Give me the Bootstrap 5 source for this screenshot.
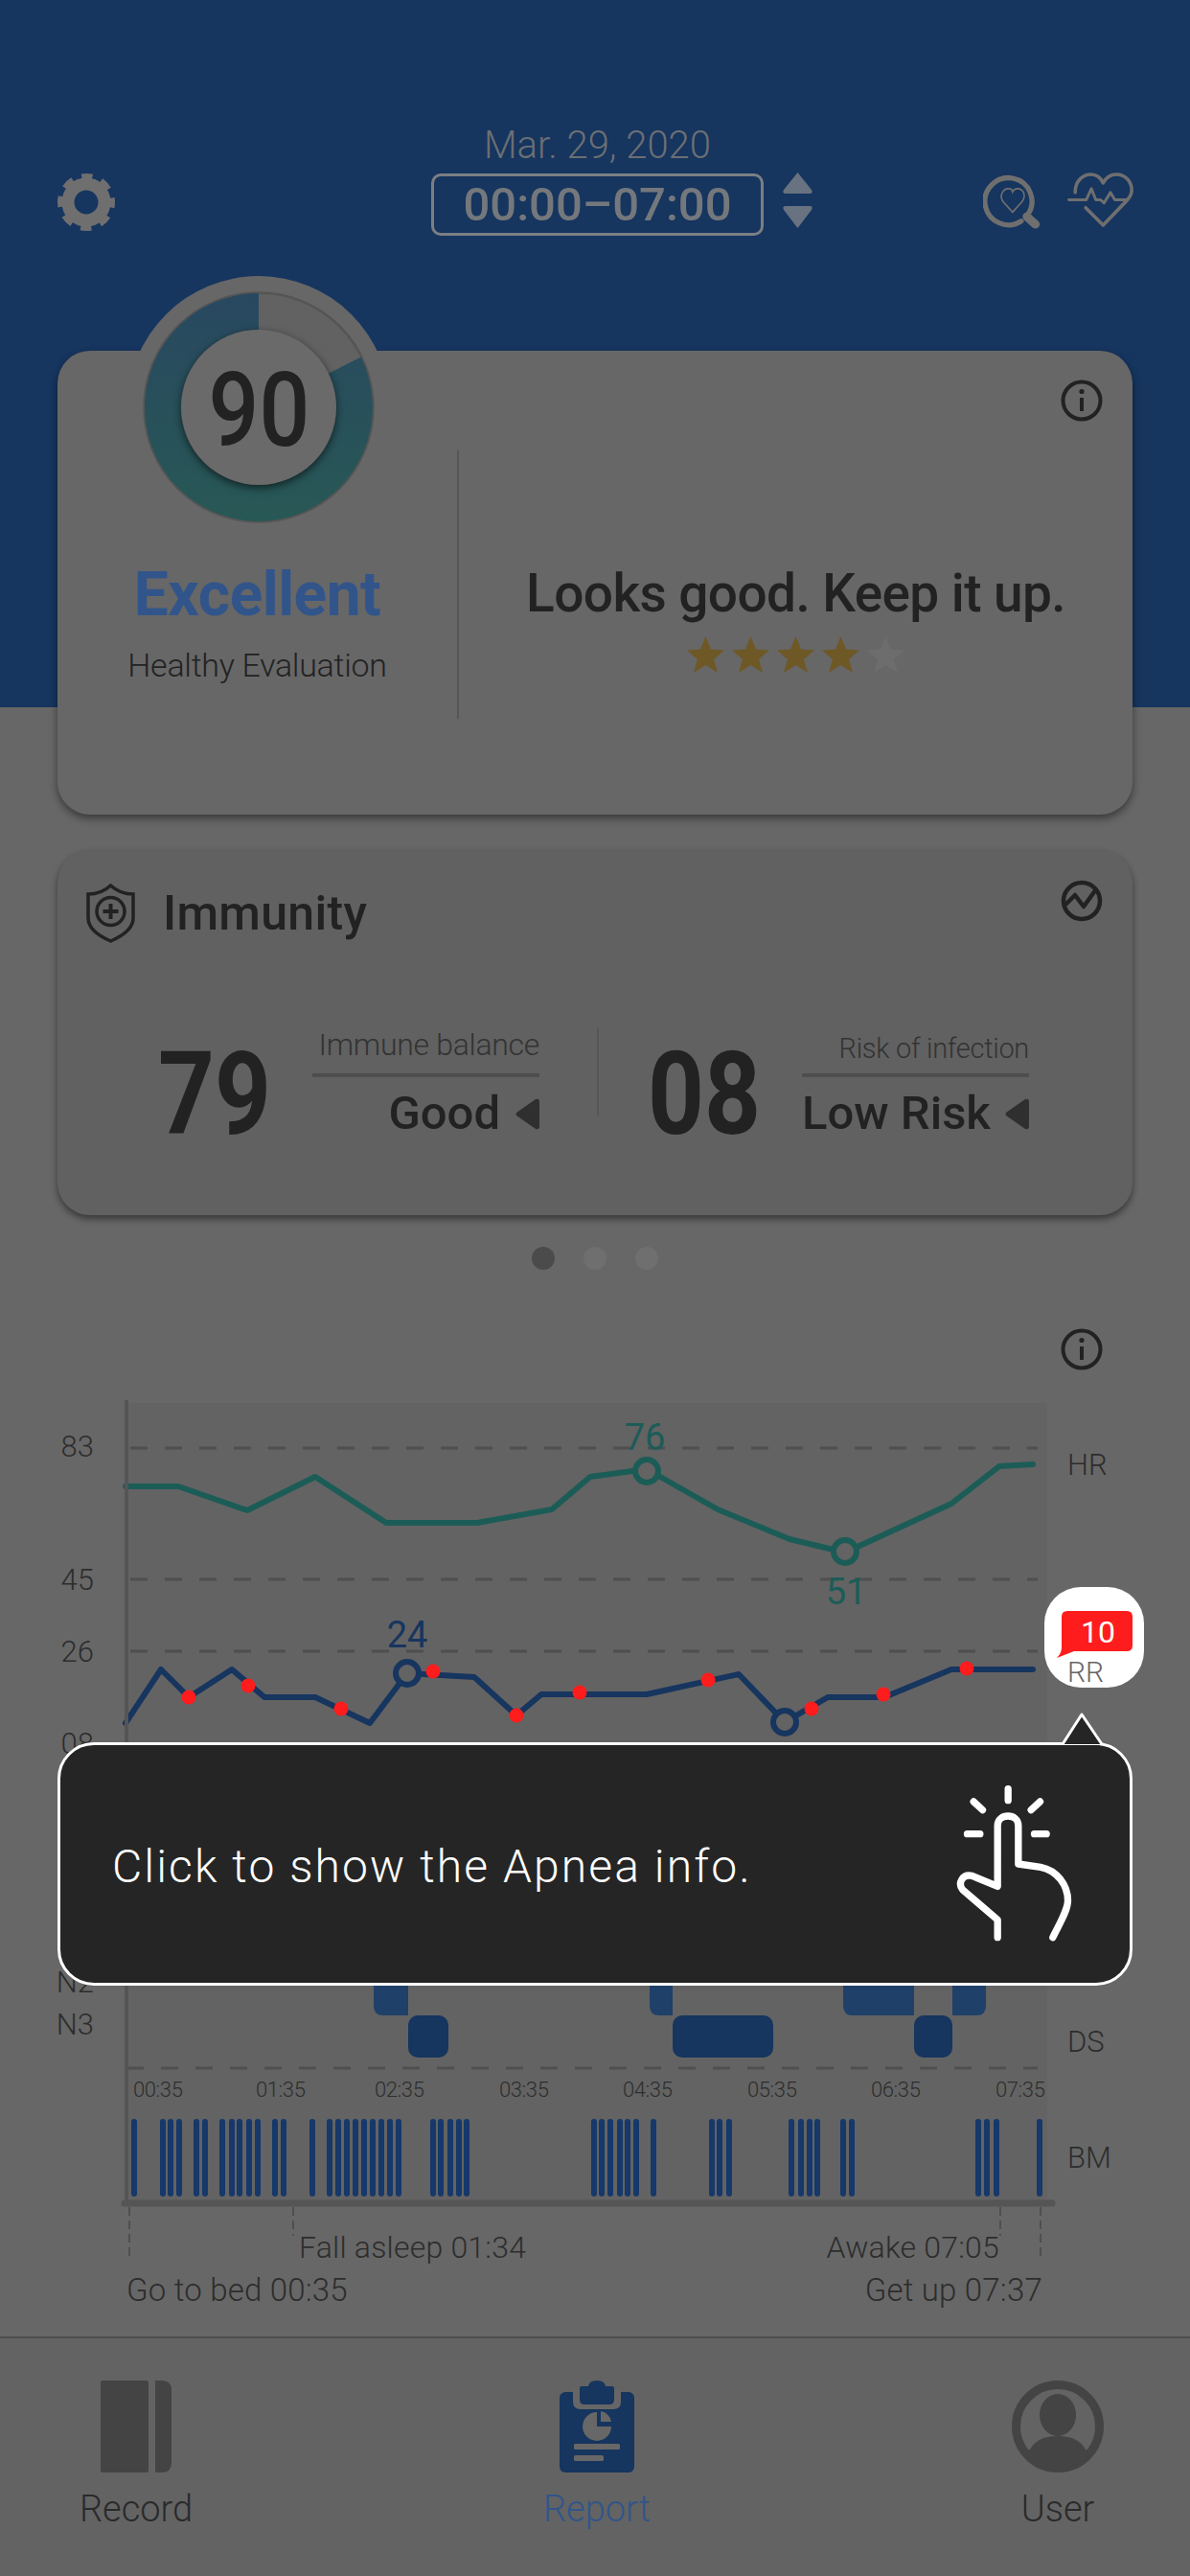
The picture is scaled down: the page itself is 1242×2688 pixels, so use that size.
<!DOCTYPE html>
<html lang="en">
<head>
<meta charset="UTF-8">
<meta name="viewport" content="width=device-width, initial-scale=1.0">
<title>Sleep Report</title>
<link href="https://cdn.jsdelivr.net/npm/bootstrap@5.3.2/dist/css/bootstrap.min.css" rel="stylesheet">
<style>
html, body { margin: 0; background: #676767; }
body { font-family: Roboto, "Liberation Sans", sans-serif; color: #222; }
.app-page { width: 1242px; height: 2688px; overflow: hidden; background: linear-gradient(#16355f 738px, #676767 738px); }
.narrow-num { display: inline-block; font-weight: 700; line-height: 1; transform-origin: left center; }

/* header */
.top-head { height: 366px; padding: 133px 55px 0 60px; display: grid; grid-template-columns: 1fr 347px 1fr; }
.gear-wrap { padding-top: 47px; }
.date-line { font-size: 40px; font-weight: 300; color: #6b6f74; text-align: center; line-height: 38px; margin-bottom: 10px; }
.time-box { height: 65px; border: 3px solid #7b7f84; border-radius: 10px; font-size: 49px; font-weight: 500; color: #74787c; line-height: 59px; text-align: center; }
.head-right { padding-top: 44px; padding-left: 19px; }
.heart-icon { margin-left: 23px; }

/* score card */
.score-card { height: 484px; margin: 0 60px; background: #676767; border-radius: 34px; box-shadow: 0 4px 8px rgba(0,0,0,.45); --bs-card-border-width: 0; }
.score-left { width: 417px; }
.gauge { width: 274px; height: 274px; margin: -78px 0 0 3px; border-radius: 50%; background: #676767; display: grid; place-items: center; }
.gauge > * { grid-area: 1 / 1; }
.gauge-num { width: 162px; height: 162px; border-radius: 50%; background: #6a6a6a; box-shadow: 0 3px 9px rgba(0,0,0,.6); display: flex; align-items: center; justify-content: center; padding-top: 6px; }
.gauge-num span { font-size: 108px; font-weight: 500; transform: scaleX(.86); transform-origin: center; }
.score-word { font-size: 64px; font-weight: 700; color: #31558a; line-height: 70px; margin-top: 24px; letter-spacing: -.5px; }
.score-sub { font-size: 34px; font-weight: 300; line-height: 40px; margin-top: 18px; letter-spacing: -.3px; }
.score-rule { width: 2px; height: 280px; margin-top: 104px; background: #565656; }
.score-right .info-row { padding: 30px 31px 0 0; }
.score-msg { font-size: 55px; font-weight: 500; line-height: 58px; margin-top: 150px; letter-spacing: -.6px; }
.star-row { margin-top: 16px; }

/* immunity card */
.immu-card { height: 381px; margin: 37px 60px 0; background: #616161; border-radius: 34px; box-shadow: 0 4px 7px rgba(0,0,0,.45); padding: 31px 31px 0 30px; --bs-card-border-width: 0; }
.immu-title { font-size: 50px; font-weight: 500; line-height: 60px; margin-left: 29px; margin-top: 5px; letter-spacing: .3px; }
.stat-row { margin-top: 88px; padding-left: 75px; }
.stat-big { width: 161px; font-size: 121px; margin-top: -20px; }
.stat-big span { transform: scaleX(.85); }
.stat-info { width: 237px; }
.stat-label { font-size: 32px; font-weight: 300; color: #333; line-height: 36px; height: 48px; text-align: right; letter-spacing: -.3px; }
.stat-label.low-label { font-size: 29px; padding-top: 4px; }
.stat-rule { height: 4px; background: #4e4e4e; }
.stat-value { font-size: 49px; font-weight: 500; line-height: 50px; margin-top: 13px; }
.stat-split { width: 2px; height: 92px; background: #565656; margin: 0 51px 0 60px; }

/* pager */
.pager-row { margin-top: 33px; gap: 30px; }
.pager-dot { width: 24px; height: 24px; border-radius: 50%; background: #6f6f6f; }
.pager-dot.on { background: #4b4b4b; }

.chart-info { padding: 61px 91px 0 0; height: 115px; }
.chart-svg { display: block; }
.chart-svg text { font-family: Roboto, "Liberation Sans", sans-serif; font-weight: 300; fill: #2d2d2d; }
.chart-svg .axis-txt { font-size: 31px; }
.chart-svg .time-txt { font-size: 22px; letter-spacing: -.4px; }
.chart-svg .foot-txt { font-size: 32px; letter-spacing: .2px; }
.chart-svg .foot-low { font-size: 33px; letter-spacing: .2px; }
.chart-svg .hr-val { font-size: 38px; fill: #1c5c57; font-weight: 400; }
.chart-svg .rr-val { font-size: 38px; fill: #16355f; font-weight: 400; }

/* bottom tabs */
.tab-bar { height: 250px; background: #636363; border-top: 2px solid #4e4e4e; padding: 44px 38px 0 42px; }
.tab-item { width: 200px; font-size: 38px; font-weight: 300; color: #2a2a2a; text-align: center; line-height: 46px; }
.tab-item.on { color: #31558a; }
.tab-icon { height: 96px; display: block; margin: 0 auto 15px; }

/* overlay tip */
.tip-box { left: 60px; top: 1818px; width: 1122px; height: 254px; background: #252525; border: 3px solid #fff; border-radius: 38px; color: #fff; padding: 0 56px 0 54px; }
.tip-text { font-size: 48px; font-weight: 300; letter-spacing: 2.1px; padding-top: 5px; }
.tip-arrow { left: 1106px; top: 1786px; z-index: 3; }
.rr-chip { left: 1090px; top: 1656px; width: 104px; height: 105px; background: #fff; border-radius: 38px; }
.rr-chip text { font-family: Roboto, "Liberation Sans", sans-serif; }
</style>
</head>
<body>
<div class="app-page position-relative">

    <!-- header -->
    <div class="top-head">
        <div class="gear-wrap">
            <svg width="60" height="62" viewBox="0 0 60 62"><circle cx="30" cy="31" r="19" fill="none" stroke="#6f6f6f" stroke-width="13"/><circle cx="30" cy="31" r="26" fill="none" stroke="#6f6f6f" stroke-width="8" stroke-dasharray="11 9.42" stroke-dashoffset="5.5"/></svg>
        </div>
        <div>
            <div class="date-line">Mar. 29, 2020</div>
            <div class="time-box">00:00–07:00</div>
        </div>
        <div class="head-right d-flex align-items-start">
            <svg width="33" height="62" viewBox="0 0 33 62"><path d="M16.5 3 L31 21 Q33 25 29 25 H4 Q0 25 2 21 Z" fill="#697280"/><path d="M16.5 61 L31 42 Q33 38 29 38 H4 Q0 38 2 42 Z" fill="#697280"/></svg>
            <svg class="ms-auto" width="63" height="63" viewBox="130 50 190 190" fill="none" stroke="#6f6f6f"><path d="M250 212 A74 74 0 1 1 272 190" stroke-width="16" stroke-linecap="round"/><path d="M268 198 L295 222" stroke-width="27" stroke-linecap="round"/><path d="M223 184 L194 152 C178 130 195 108 212 110 C218 110 222 114 223 120 C226 114 232 110 238 110 C256 110 268 130 252 152 Z" stroke-width="5"/></svg>
            <svg class="heart-icon" width="75" height="63" viewBox="395 50 225 190" fill="none" stroke="#6f6f6f" stroke-width="11" stroke-linecap="round" stroke-linejoin="round"><path d="M425 122 C425 85 450 65 475 65 C490 65 505 75 513 92 C522 75 537 65 555 65 C585 65 603 90 603 115 C603 130 595 140 585 150 L513 225 L458 170"/><path d="M405 145 H460 L476 110 L490 145 H505 L516 155 L536 122 L550 145 H590" stroke-width="9"/></svg>
        </div>
    </div>

    <!-- score -->
    <div class="card score-card flex-row">
        <div class="score-left d-flex flex-column align-items-center text-center">
            <div class="gauge">
                <svg width="242" height="242" viewBox="0 0 242 242">
                    <defs><linearGradient id="ringFill" x1="0" y1="0" x2="0" y2="1"><stop offset="0" stop-color="#284860"/><stop offset="1" stop-color="#285855"/></linearGradient></defs>
                    <circle cx="121" cy="121" r="119.5" fill="#626262" stroke="#555" stroke-width="2.5"/>
                    <path d="M121 2 A119 119 0 1 0 227.8 68.6 L193.7 85.7 A81 81 0 1 1 121 40 Z" fill="url(#ringFill)"/>
                </svg>
                <div class="gauge-num"><span class="narrow-num">90</span></div>
            </div>
            <div class="score-word">Excellent</div>
            <div class="score-sub">Healthy Evaluation</div>
        </div>
        <div class="score-rule"></div>
        <div class="score-right flex-fill text-center">
            <div class="info-row d-flex justify-content-end">
                <svg width="44" height="44" viewBox="0 0 44 44" fill="none" stroke="#222" stroke-width="4"><circle cx="22" cy="22" r="19.5"/><path d="M22 19 V33"/><circle cx="22" cy="12.5" r="2.6" fill="#222" stroke="none"/></svg>
            </div>
            <div class="score-msg">Looks good. Keep it up.</div>
            <div class="star-row d-flex justify-content-center" id="starRow"></div>
        </div>
    </div>

    <!-- immunity -->
    <div class="card immu-card">
        <div class="d-flex align-items-start">
            <svg class="mt-1" width="51" height="62" viewBox="0 0 51 62" fill="none" stroke="#222" stroke-width="3.5"><path d="M25.5 2 C33 9 41 11 49 11 V36 C49 47 37 55 25.5 60 C14 55 2 47 2 36 V11 C10 11 18 9 25.5 2 Z"/><circle cx="25.5" cy="29" r="14.5"/><path d="M25.5 21 V37 M17.5 29 H33.5" stroke-width="4"/></svg>
            <div class="immu-title flex-fill">Immunity</div>
            <svg width="44" height="44" viewBox="0 0 44 44" fill="none" stroke="#222" stroke-width="4.5" stroke-linejoin="round"><circle cx="22" cy="22" r="19"/><path d="M5 26 L15 16 L24 28 L37 10"/></svg>
        </div>
        <div class="stat-row d-flex align-items-start">
            <div class="stat-big"><span class="narrow-num">79</span></div>
            <div class="stat-info">
                <div class="stat-label">Immune balance</div>
                <div class="stat-rule"></div>
                <div class="stat-value d-flex justify-content-end align-items-center gap-3">Good <svg width="25" height="33" viewBox="0 0 25 33"><path d="M21 1 Q25 0 25 4 V29 Q25 33 21 32 L1 18 Q0 16.5 1 15 Z" fill="#2f2f2f"/></svg></div>
            </div>
            <div class="stat-split"></div>
            <div class="stat-big"><span class="narrow-num">08</span></div>
            <div class="stat-info">
                <div class="stat-label low-label">Risk of infection</div>
                <div class="stat-rule"></div>
                <div class="stat-value d-flex justify-content-between align-items-center">Low Risk <svg width="25" height="33" viewBox="0 0 25 33"><path d="M21 1 Q25 0 25 4 V29 Q25 33 21 32 L1 18 Q0 16.5 1 15 Z" fill="#2f2f2f"/></svg></div>
            </div>
        </div>
    </div>

    <div class="pager-row d-flex justify-content-center">
        <span class="pager-dot on"></span><span class="pager-dot"></span><span class="pager-dot"></span>
    </div>

    <div class="chart-info d-flex justify-content-end">
        <svg width="44" height="44" viewBox="0 0 44 44" fill="none" stroke="#222" stroke-width="4"><circle cx="22" cy="22" r="19.5"/><path d="M22 19 V33"/><circle cx="22" cy="12.5" r="2.6" fill="#222" stroke="none"/></svg>
    </div>

    <!-- chart, coordinates are page pixels -->
    <svg class="chart-svg" id="chart" width="1242" height="998" viewBox="0 1440 1242 998">
        <rect x="132" y="1464" width="961" height="835" fill="#636363"/>
        <g stroke="#4f4f4f" stroke-width="3" stroke-dasharray="18 18" fill="none">
            <path d="M136 1511 H1083"/><path d="M136 1648 H1083"/><path d="M136 1723 H1083"/><path d="M132 2158 H1083"/>
        </g>
        <text class="axis-txt" x="98" y="1520" text-anchor="end">83</text>
        <text class="axis-txt" x="98" y="1659" text-anchor="end">45</text>
        <text class="axis-txt" x="98" y="1734" text-anchor="end">26</text>
        <text class="axis-txt" x="98" y="1830" text-anchor="end">08</text>
        <text class="axis-txt" x="98" y="2079" text-anchor="end">N2</text>
        <text class="axis-txt" x="98" y="2123" text-anchor="end">N3</text>
        <text class="axis-txt" x="1114" y="1539">HR</text>
        <text class="axis-txt" x="1114" y="2141">DS</text>
        <text class="axis-txt" x="1114" y="2262">BM</text>

        <polyline fill="none" stroke="#1c5c57" stroke-width="6" stroke-linejoin="round" stroke-linecap="round" points="131,1551 186,1551 258,1576 329,1541 403,1589 498,1589 576,1575 616,1541 675,1533 749,1575 824,1606 882,1620 993,1569 1043,1530 1078,1528"/>
        <circle cx="675" cy="1535" r="12" fill="#636363" stroke="#1c5c57" stroke-width="6"/>
        <circle cx="882" cy="1619" r="12" fill="#636363" stroke="#1c5c57" stroke-width="6"/>
        <text class="hr-val" x="673" y="1513" text-anchor="middle">76</text>
        <text class="hr-val" x="883" y="1674" text-anchor="middle">51</text>

        <polyline fill="none" stroke="#16355f" stroke-width="6" stroke-linejoin="round" stroke-linecap="round" points="131,1798 168,1742 197,1771 242,1742 276,1771 329,1771 386,1798 425,1746 495,1750 539,1790 565,1768 675,1768 771,1747 819,1797 864,1771 923,1771 993,1742 1078,1742"/>
        <circle cx="425" cy="1746" r="12" fill="#636363" stroke="#16355f" stroke-width="6"/>
        <circle cx="819" cy="1797" r="12" fill="#636363" stroke="#16355f" stroke-width="6"/>
        <text class="rr-val" x="425" y="1719" text-anchor="middle">24</text>
        <g fill="#ff1c1c" id="redDots"></g>

        <g fill="#1f4068">
            <path d="M390 2060 H426 V2103 H400 Q390 2103 390 2093 Z"/>
            <path d="M678 2060 H702 V2103 H688 Q678 2103 678 2093 Z"/>
            <path d="M880 2060 H954 V2103 H890 Q880 2103 880 2093 Z"/>
            <path d="M994 2060 H1029 V2093 Q1029 2103 1019 2103 H994 Z"/>
        </g>
        <g fill="#16355f">
            <rect x="426" y="2103" width="42" height="44" rx="10"/>
            <rect x="702" y="2103" width="105" height="44" rx="10"/>
            <rect x="954" y="2103" width="40" height="44" rx="10"/>
        </g>

        <g id="timeLabels"></g>
        <g id="bmBars" stroke="#16386a" stroke-width="6" stroke-linecap="round"></g>

        <path d="M132 1461 V2299" stroke="#555" stroke-width="4"/>
        <path d="M130 2299 H1098" stroke="#555" stroke-width="7" stroke-linecap="round"/>

        <g stroke="#4f4f4f" stroke-width="2" stroke-dasharray="9 5">
            <path d="M135 2303 V2358"/><path d="M306 2303 V2333"/><path d="M1044 2303 V2333"/><path d="M1086 2303 V2358"/>
        </g>
        <text class="foot-txt" x="312" y="2356">Fall asleep 01:34</text>
        <text class="foot-txt" x="1043" y="2356" text-anchor="end">Awake 07:05</text>
        <text class="foot-low" x="132" y="2401">Go to bed 00:35</text>
        <text class="foot-low" x="1088" y="2401" text-anchor="end">Get up 07:37</text>
    </svg>

    <!-- tabs -->
    <div class="tab-bar d-flex justify-content-between">
        <div class="tab-item">
            <svg class="tab-icon" width="75" height="96" viewBox="0 0 75 96" fill="#444"><rect x="0" y="0" width="50" height="96" rx="2"/><path d="M57 0 H64 Q74 0 74 10 V86 Q74 96 64 96 H57 Z"/></svg>
            Record
        </div>
        <div class="tab-item on">
            <svg class="tab-icon" width="78" height="96" viewBox="0 0 78 96"><rect x="0" y="12" width="78" height="84" rx="6" fill="#16355f"/><path d="M14 10 V22 Q14 30 22 30 H56 Q64 30 64 22 V10 Z" fill="#666"/><path d="M21 8 Q21 6 23 6 H30 Q31 0 39 0 Q47 0 48 6 H55 Q57 6 57 8 V20 Q57 25 52 25 H26 Q21 25 21 20 Z" fill="#16355f"/><path d="M39 33 A15 15 0 1 0 54 48 H39 Z" fill="#676767"/><path d="M43 32 A13 13 0 0 1 54 43 H43 Z" fill="#676767"/><rect x="15" y="66" width="48" height="6" rx="1.5" fill="#676767"/><rect x="15" y="78" width="31" height="6" rx="1.5" fill="#676767"/></svg>
            Report
        </div>
        <div class="tab-item">
            <svg class="tab-icon" width="96" height="96" viewBox="0 0 96 96"><circle cx="48" cy="48" r="43.5" fill="none" stroke="#444" stroke-width="9"/><ellipse cx="48" cy="36" rx="19" ry="22" fill="#444"/><path d="M16 78 C22 62 34 58 48 58 C62 58 74 62 80 78 C72 88 60 92 48 92 C36 92 24 88 16 78 Z" fill="#444"/></svg>
            User
        </div>
    </div>

    <!-- guide overlay -->
    <div class="rr-chip position-absolute">
        <svg width="104" height="105" viewBox="0 0 104 105"><path d="M24 25 H86 Q92 25 92 31 V61 Q92 67 86 67 H31 L13 74 Q19 68 18 60 V31 Q18 25 24 25 Z" fill="#ff1c1c"/><text x="56" y="58" fill="#fff" font-size="32" font-weight="400" text-anchor="middle">10</text><text x="24" y="99" fill="#666" font-size="30" font-weight="300">RR</text></svg>
    </div>
    <svg class="tip-arrow position-absolute" width="48" height="37" viewBox="0 0 48 37"><path d="M3 34 L23 3 L44 34" fill="#252525" stroke="#fff" stroke-width="3" stroke-linejoin="round"/><path d="M5 35 H42 V37 H5 Z" fill="#252525"/></svg>
    <div class="tip-box position-absolute d-flex align-items-center justify-content-between">
        <div class="tip-text">Click to show the Apnea info.</div>
        <svg width="127" height="170" viewBox="120 660 380 510" fill="none" stroke="#fff" stroke-width="22" stroke-linecap="round" stroke-linejoin="round"><path d="M255 1145 V1090 L145 995 C130 975 145 945 175 952 L255 985 V795 C255 755 320 755 320 795 V915 L390 925 C440 935 475 980 475 1030 C475 1060 450 1100 428 1145"/><path d="M288 680 V716 M180 720 L208 746 M388 720 L360 746 M160 821 H200 M370 821 H408"/></svg>
    </div>
</div>

<script>
    // stars
    const starRow = document.getElementById('starRow');
    for (let i = 0; i < 5; i++) {
        const fill = i < 4 ? '#6e5826' : '#6d6d6d';
        starRow.innerHTML += `<svg width="47" height="38" viewBox="0 0 47 38"><path d="M23.5 0 L29 13.5 L43 14.5 L32 24 L36 38 L23.5 30 L11 38 L15 24 L4 14.5 L18 13.5 Z" fill="${fill}"/></svg>`;
    }

    const ns = 'http://www.w3.org/2000/svg';

    // apnea dots
    const dots = [[197,1771],[259,1759],[356,1783],[452,1744],[539,1790],[605,1766],[739,1753],[847,1783],[922,1768],[1009,1741]];
    const dotGroup = document.getElementById('redDots');
    dots.forEach(d => {
        const c = document.createElementNS(ns, 'circle');
        c.setAttribute('cx', d[0]);
        c.setAttribute('cy', d[1]);
        c.setAttribute('r', 7.5);
        dotGroup.appendChild(c);
    });

    // time axis
    const times = [['00:35',139],['01:35',267],['02:35',391],['03:35',521],['04:35',650],['05:35',780],['06:35',909],['07:35',1039]];
    const timeGroup = document.getElementById('timeLabels');
    times.forEach(t => {
        const el = document.createElementNS(ns, 'text');
        el.setAttribute('class', 'time-txt');
        el.setAttribute('x', t[1]);
        el.setAttribute('y', 2188);
        el.textContent = t[0];
        timeGroup.appendChild(el);
    });

    // body movement bars
    const bm = [140,170,178,187,205,214,232,242,250,260,269,287,296,326,344,353,362,371,380,389,398,407,416,452,460,470,479,487,620,628,637,647,655,664,682,743,751,761,826,836,845,853,880,889,1021,1030,1040,1085];
    const bmGroup = document.getElementById('bmBars');
    bm.forEach(x => {
        const l = document.createElementNS(ns, 'line');
        l.setAttribute('x1', x);
        l.setAttribute('x2', x);
        l.setAttribute('y1', 2214);
        l.setAttribute('y2', 2289);
        bmGroup.appendChild(l);
    });
</script>
<script src="https://cdn.jsdelivr.net/npm/bootstrap@5.3.2/dist/js/bootstrap.bundle.min.js"></script>
</body>
</html>
